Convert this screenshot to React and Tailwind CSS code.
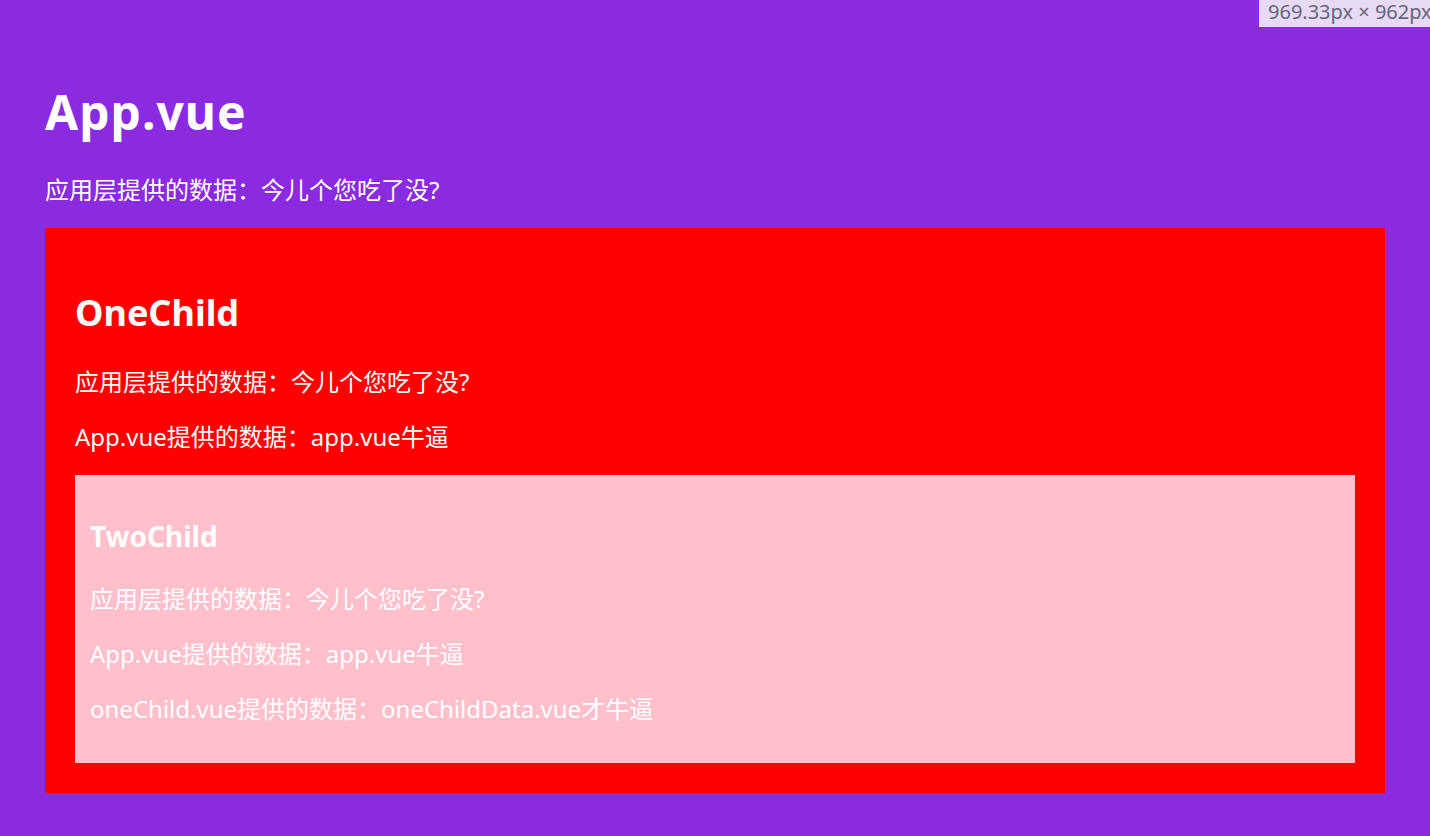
const font = {
  fontFamily: '"Noto Sans", "Noto Sans CJK SC", sans-serif',
}

function Line({ children }) {
  return <p className="my-0 text-[24px] leading-[31px] text-white">{children}</p>
}

function TwoChild() {
  return (
    <div className="mt-[23px] bg-[#ffc0cb] px-[15px] pt-[43px] pb-[39px]">
      <h3 className="text-[28px] font-bold leading-[37px] text-white">TwoChild</h3>
      <div className="mt-[28px] flex flex-col gap-[24px]">
        <Line>应用层提供的数据：今儿个您吃了没?</Line>
        <Line>App.vue提供的数据：app.vue牛逼</Line>
        <Line>oneChild.vue提供的数据：oneChildData.vue才牛逼</Line>
      </div>
    </div>
  )
}

function OneChild() {
  return (
    <div className="mt-[23px] bg-[#ff0000] px-[30px] pt-[61px] pb-[30px]">
      <h2 className="text-[36px] font-bold leading-[47px] text-white">OneChild</h2>
      <div className="mt-[30px] flex flex-col gap-[24px]">
        <Line>应用层提供的数据：今儿个您吃了没?</Line>
        <Line>App.vue提供的数据：app.vue牛逼</Line>
      </div>
      <TwoChild />
    </div>
  )
}

export default function App() {
  return (
    <div
      className="relative h-[836px] overflow-hidden bg-[#8a2be2] px-[45px] pt-[80px]"
      style={font}
    >
      <h1 className="text-[48px] font-bold leading-[63px] tracking-[1px] text-white">App.vue</h1>
      <div className="mt-[31px]">
        <Line>应用层提供的数据：今儿个您吃了没?</Line>
      </div>
      <OneChild />

      {/* devtools size hint */}
      <div className="absolute top-0 left-[1259px] h-[27px] whitespace-nowrap bg-[#e6daf5] pl-[9px] text-[20px] leading-[24px] text-[#66667a]">
        969.33px × 962px
      </div>
    </div>
  )
}
